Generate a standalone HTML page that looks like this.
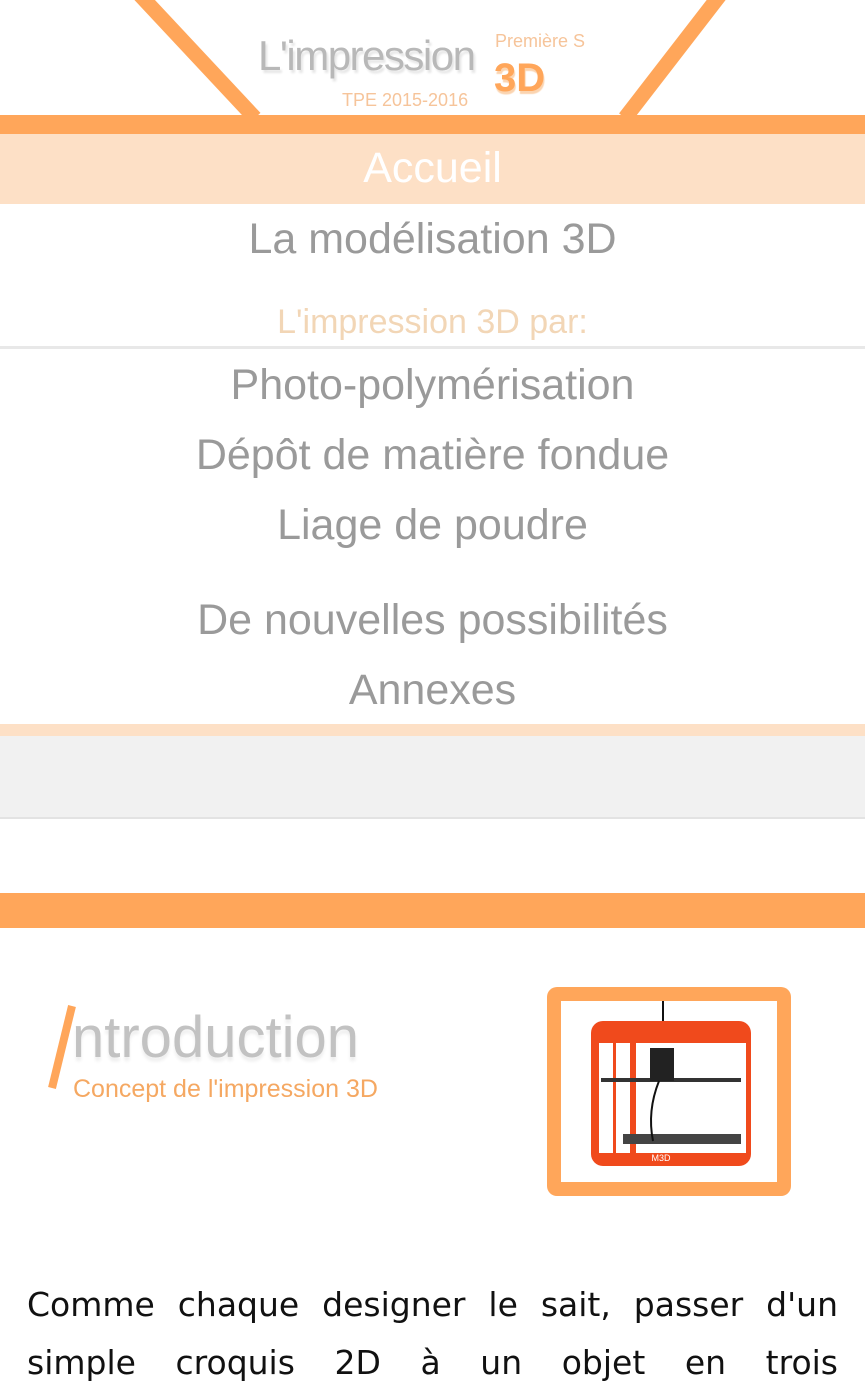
<!DOCTYPE html>
<html><head><meta charset="utf-8"><style>
body{margin:0;width:865px;height:1388px;overflow:hidden;background:#fff;font-family:"Liberation Sans",sans-serif;position:relative}
.a{position:absolute}
.nav{position:absolute;left:0;width:865px;text-align:center;color:#9a9a9a;font-size:43px;line-height:50px}
</style></head><body>
<svg class="a" style="left:0;top:0" width="865" height="140">
<line x1="140" y1="-5" x2="255" y2="118" stroke="#ffa65a" stroke-width="15"/>
<line x1="720" y1="-5" x2="625" y2="118" stroke="#ffa65a" stroke-width="15"/>
</svg>
<div class="a" style="left:258px;top:32px;font-size:42px;letter-spacing:-1.5px;color:#b8b8b8;text-shadow:2px 3px 2px #e6e6e6">L'impression</div>
<div class="a" style="left:342px;top:90px;font-size:18px;color:#f6c49a">TPE 2015-2016</div>
<div class="a" style="left:495px;top:31px;font-size:18px;color:#f6c49a">Première S</div>
<div class="a" style="left:494px;top:56px;font-size:40px;font-weight:bold;color:#ffa65a;text-shadow:1px 3px 1px #fbd4b0">3D</div>
<div class="a" style="left:0;top:115px;width:865px;height:19px;background:#ffa65a"></div>
<div class="a" style="left:0;top:134px;width:865px;height:70px;background:#fde0c6"></div>
<div class="nav" style="top:143px;color:#fff">Accueil</div>
<div class="nav" style="top:214px">La modélisation 3D</div>
<div class="nav" style="top:297px;font-size:34px;color:#f2d6b6">L'impression 3D par:</div>
<div class="a" style="left:0;top:346px;width:865px;height:3px;background:#e8e8e8"></div>
<div class="nav" style="top:360px">Photo-polymérisation</div>
<div class="nav" style="top:430px">Dépôt de matière fondue</div>
<div class="nav" style="top:500px">Liage de poudre</div>
<div class="nav" style="top:595px">De nouvelles possibilités</div>
<div class="nav" style="top:665px">Annexes</div>
<div class="a" style="left:0;top:724px;width:865px;height:12px;background:#fde0c6"></div>
<div class="a" style="left:0;top:736px;width:865px;height:81px;background:#f1f1f1"></div>
<div class="a" style="left:0;top:817px;width:865px;height:2px;background:#e3e3e3"></div>
<div class="a" style="left:0;top:893px;width:865px;height:35px;background:#ffa65a"></div>
<svg class="a" style="left:40px;top:1000px" width="40" height="95"><line x1="32" y1="6" x2="12" y2="88" stroke="#ffa65a" stroke-width="8"/></svg>
<div class="a" style="left:72px;top:1004px;font-size:58px;color:#c2c2c2;text-shadow:0 4px 3px #eee">ntroduction</div>
<div class="a" style="left:73px;top:1075px;font-size:25px;color:#f5a862">Concept de l'impression 3D</div>
<div class="a" style="left:547px;top:987px;width:244px;height:209px;background:#ffa65a;border-radius:10px"></div>
<div class="a" style="left:561px;top:1001px;width:216px;height:181px;background:#fff"></div>
<svg class="a" style="left:561px;top:1001px" width="216" height="181">
<path d="M102 0 v20" stroke="#111" stroke-width="2"/>
<rect x="30" y="20" width="160" height="145" rx="12" fill="#f04a1c"/>
<rect x="75" y="42" width="110" height="110" fill="#fff"/>
<rect x="38" y="42" width="14" height="110" fill="#fff"/>
<rect x="55" y="42" width="14" height="110" fill="#fff"/>
<rect x="62" y="133" width="118" height="10" fill="#444"/>
<rect x="40" y="77" width="140" height="4" fill="#333"/>
<rect x="89" y="47" width="24" height="33" fill="#222"/>
<path d="M98 80 q-12 30-6 60" stroke="#111" stroke-width="2" fill="none"/>
<text x="100" y="160" font-size="9" fill="#fff" font-family="Liberation Sans" text-anchor="middle">M3D</text>
</svg>
<div class="a" style="left:27px;top:1276px;width:811px;font-family:'DejaVu Sans',sans-serif;font-size:33px;line-height:58px;text-align:justify;text-align-last:justify;color:#111">Comme chaque designer le sait, passer d'un simple croquis 2D à un objet en trois</div>
</body></html>
